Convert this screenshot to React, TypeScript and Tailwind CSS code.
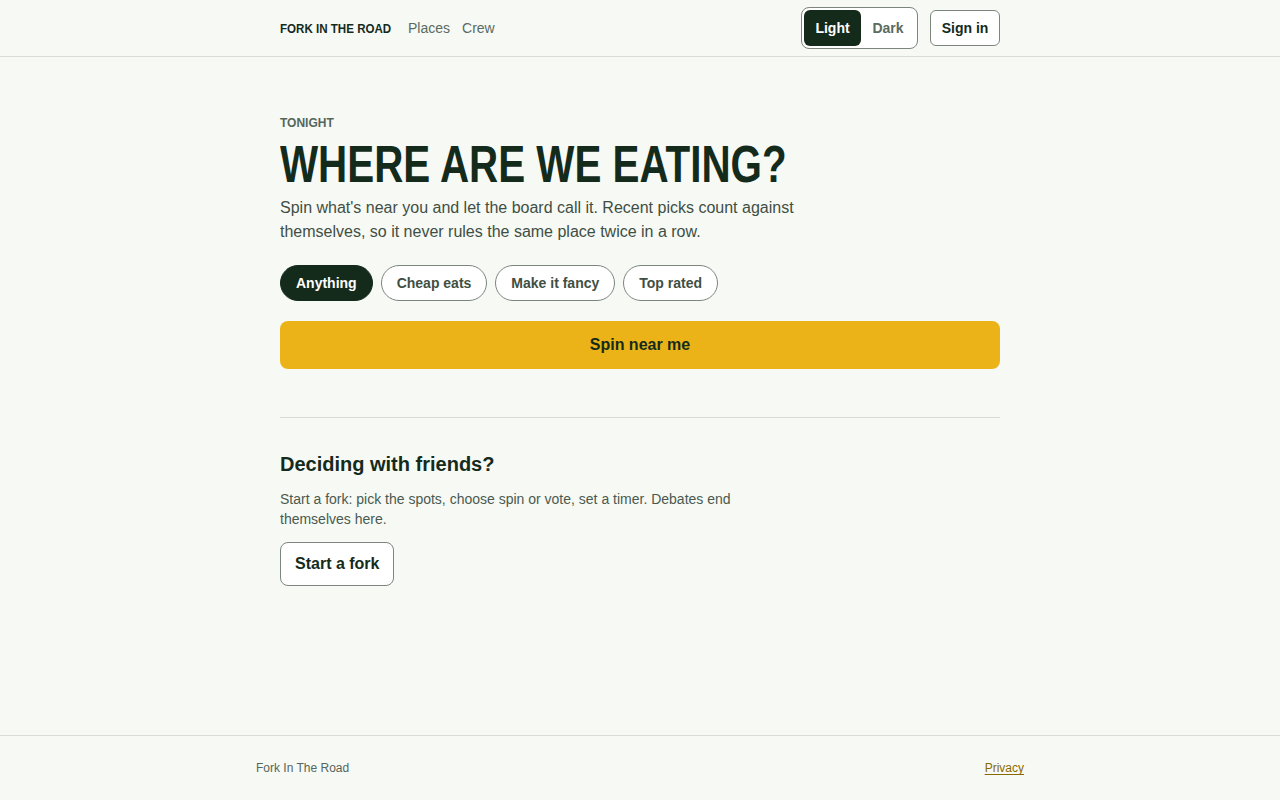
import React from "react";

const sans = { fontFamily: '"Liberation Sans", Arial, sans-serif' };

const chips = ["Anything", "Cheap eats", "Make it fancy", "Top rated"];

export default function App() {
  const [active, setActive] = React.useState("Anything");
  const [theme, setTheme] = React.useState<"light" | "dark">("light");

  return (
    <div style={sans} className="min-h-screen flex flex-col bg-[#f7f9f5] text-[#142b1c]">
      <header className="h-[57px] border-b border-[#d9ddd6]">
        <div className="mx-auto w-[720px] h-full flex items-center justify-between">
          <nav className="flex items-center">
            <span className="block w-[111px] whitespace-nowrap">
              <span className="inline-block origin-left scale-x-[0.89] text-[13px] font-bold uppercase text-[#142b1c]">
                Fork In The Road
              </span>
            </span>
            <a className="ml-[17px] text-[14px] text-[#5a6b5f]">Places</a>
            <a className="ml-3 text-[14px] text-[#5a6b5f]">Crew</a>
          </nav>
          <div className="flex items-center gap-3">
            <div className="flex items-center p-[2px] h-[42px] border border-[#7c857e] rounded-lg bg-white">
              <button
                onClick={() => setTheme("light")}
                className={`h-[36px] w-[57px] rounded-md text-[14px] font-semibold ${theme === "light" ? "bg-[#142b1c] text-white" : "text-[#5a6b5f]"}`}
              >
                Light
              </button>
              <button
                onClick={() => setTheme("dark")}
                className={`h-[36px] w-[54px] rounded-md text-[14px] font-semibold ${theme === "dark" ? "bg-[#142b1c] text-white" : "text-[#5a6b5f]"}`}
              >
                Dark
              </button>
            </div>
            <button className="h-[36px] w-[70px] rounded-md border border-[#7c857e] bg-white text-[14px] font-semibold text-[#142b1c]">
              Sign in
            </button>
          </div>
        </div>
      </header>

      <main className="flex-1">
        <div className="mx-auto w-[720px] pt-[58px]">
          <p className="text-[12px] font-bold uppercase leading-4 text-[#55665a]">Tonight</p>
          <h1 className="mt-[7px] h-[52px] whitespace-nowrap">
            <span className="inline-block origin-left scale-x-[0.776] text-[52px] leading-[52px] font-bold uppercase text-[#142b1c]">
              Where are we eating?
            </span>
          </h1>
          <p className="mt-[6px] max-w-[540px] text-[16px] leading-6 text-[#3f4f44]">
            Spin what's near you and let the board call it. Recent picks count against themselves, so it never rules the same place twice in a row.
          </p>
          <div className="mt-[21px] flex gap-2">
            {chips.map((c) => (
              <button
                key={c}
                onClick={() => setActive(c)}
                className={`h-[36px] px-[15px] rounded-full text-[14px] font-semibold border ${
                  active === c
                    ? "bg-[#142b1c] border-[#142b1c] text-white"
                    : "bg-white border-[#7c857e] text-[#3f4f44]"
                }`}
              >
                {c}
              </button>
            ))}
          </div>
          <button className="mt-5 w-full h-[48px] rounded-lg bg-[#ebb318] text-[16px] font-semibold text-[#142b1c]">
            Spin near me
          </button>

          <div className="mt-12 border-t border-[#d9ddd6]" />

          <h2 className="mt-[32px] text-[20px] leading-7 font-semibold text-[#142b1c]">Deciding with friends?</h2>
          <p className="mt-[11px] max-w-[470px] text-[14px] leading-5 text-[#4a5a4f]">
            Start a fork: pick the spots, choose spin or vote, set a timer. Debates end themselves here.
          </p>
          <button className="mt-[13px] h-[44px] px-[14px] rounded-lg border border-[#7c857e] bg-white text-[16px] font-semibold text-[#142b1c]">
            Start a fork
          </button>
        </div>
      </main>

      <footer className="h-[65px] border-t border-[#d9ddd6]">
        <div className="mx-auto w-[768px] h-full flex items-center justify-between text-[12px]">
          <span className="text-[#55665a]">Fork In The Road</span>
          <a className="underline underline-offset-2 text-[#8a6a00]">Privacy</a>
        </div>
      </footer>
    </div>
  );
}
